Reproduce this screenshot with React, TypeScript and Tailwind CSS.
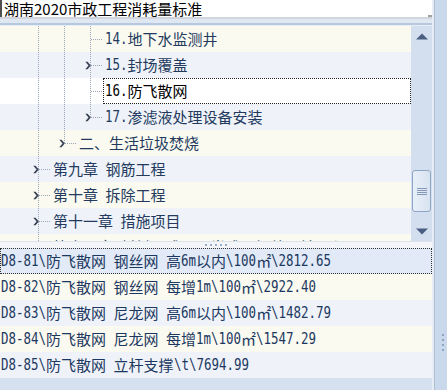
import React from 'react';

const ASCII = /^[\x20-\x7e]+$/;

function Mixed({ text }: { text: string }) {
  const parts = text.match(/[\x20-\x7e]+|[^\x20-\x7e]+/g) ?? [];
  return (
    <>
      {parts.map((p, i) =>
        ASCII.test(p) ? (
          <span
            key={i}
            className="inline-block origin-left scale-x-[0.83] whitespace-pre font-['DejaVu_Sans_Mono',monospace] text-[15px]"
            style={{ marginRight: p.length * 7.5 - p.length * 9.03 }}
          >
            {p}
          </span>
        ) : (
          <span key={i}>{p}</span>
        ),
      )}
    </>
  );
}

type Guide = 'full' | 'top';
type TreeRow = { cols: Guide[]; exp: boolean; text: string; sel?: boolean };

function Cell({ g, conn, exp }: { g: Guide; conn: boolean; exp: boolean }) {
  return (
    <svg width="26" height="26" className="block shrink-0">
      <line
        x1="13.5"
        y1="0"
        x2="13.5"
        y2={g === 'full' ? 26 : 13}
        stroke="#9aa5b7"
        strokeDasharray="1 1"
      />
      {conn && <line x1="14" y1="13.5" x2="26" y2="13.5" stroke="#9aa5b7" strokeDasharray="1 1" />}
      {exp && <path d="M8.3 9.8 L10.6 9.8 L13.8 13.5 L10.6 17.2 L8.3 17.2 L11.5 13.5 Z" fill="#3a4356" />}
    </svg>
  );
}

const treeRows: TreeRow[] = [
  { cols: ['full', 'full', 'full'], exp: false, text: '14.地下水监测井' },
  { cols: ['full', 'full', 'full'], exp: true, text: '15.封场覆盖' },
  { cols: ['full', 'full', 'full'], exp: false, text: '16.防飞散网', sel: true },
  { cols: ['full', 'full', 'top'], exp: true, text: '17.渗滤液处理设备安装' },
  { cols: ['full', 'top'], exp: true, text: '二、生活垃圾焚烧' },
  { cols: ['full'], exp: true, text: '第九章 钢筋工程' },
  { cols: ['full'], exp: true, text: '第十章 拆除工程' },
  { cols: ['full'], exp: true, text: '第十一章 措施项目' },
  { cols: ['full'], exp: true, text: '第十二章 材料及成品、半成品场外运输工程' },
];

const listRows = [
  'D8-81\\防飞散网 钢丝网 高6m以内\\100㎡\\2812.65',
  'D8-82\\防飞散网 钢丝网 每增1m\\100㎡\\2922.40',
  'D8-83\\防飞散网 尼龙网 高6m以内\\100㎡\\1482.79',
  'D8-84\\防飞散网 尼龙网 每增1m\\100㎡\\1547.29',
  'D8-85\\防飞散网 立杆支撑\\t\\7694.99',
];

function Arrow({ up }: { up: boolean }) {
  return (
    <svg width="12" height="7" className="block">
      <path d={up ? 'M0 6.5 L6 0.5 L12 6.5 Z' : 'M0 0.5 L6 6.5 L12 0.5 Z'} fill="#4a5d82" />
    </svg>
  );
}

export default function App() {
  return (
    <div className="flex h-[390px] w-[447px] overflow-hidden bg-[#d5e1ef] font-['Noto_Sans_CJK_SC',sans-serif] text-[15px]">
      <div className="flex w-[432px] shrink-0 flex-col">
        {/* top input */}
        <div className="relative h-[17px] shrink-0 border-l-2 border-[#4f4f4f] bg-white pl-[2px] leading-[17px] text-black">
          湖南2020市政工程消耗量标准
          <span className="absolute bottom-0 right-0 h-[2px] w-[4px] bg-[#a0a0a0]" />
        </div>
        <div className="h-[2px] shrink-0 bg-[#d2d6dc]" />
        <div className="h-[4px] shrink-0 bg-[#dfe7f2]" />
        <div className="h-[2px] shrink-0 bg-[#b7c8de]" />
        <div className="h-[1px] shrink-0 bg-[#e8eef6]" />

        {/* tree */}
        <div className="flex h-[215px] shrink-0">
          <div className="w-[411px] shrink-0 overflow-hidden text-[#233a5e]">
            {treeRows.map((r, idx) => (
              <div
                key={idx}
                className={`flex h-[26px] ${r.sel ? 'bg-white' : idx % 2 === 0 ? 'bg-[#fbfaf0]' : 'bg-[#eff3f9]'}`}
              >
                <div className="w-[25px] shrink-0" />
                {r.cols.map((g, i) => (
                  <Cell key={i} g={g} conn={i === r.cols.length - 1} exp={r.exp && i === r.cols.length - 1} />
                ))}
                <div
                  className={`flex flex-1 items-center whitespace-nowrap border pl-[1px] leading-[20px] ${
                    r.sel ? 'border-dotted border-[#222] text-black' : 'border-transparent'
                  }`}
                >
                  <Mixed text={r.text} />
                </div>
              </div>
            ))}
          </div>
          {/* scrollbar */}
          <div className="flex w-[21px] shrink-0 flex-col bg-[#d3dfee]">
            <div className="flex h-[20px] shrink-0 items-center justify-center">
              <Arrow up />
            </div>
            <div className="h-[124px] shrink-0" />
            <div className="mx-[1px] flex h-[42px] shrink-0 flex-col items-center justify-center gap-[1px] rounded-[3px] border border-[#8ea6c6] bg-gradient-to-r from-[#e8eff8] to-[#d8e3f1]">
              <div className="h-px w-[10px] bg-[#8398b8]" />
              <div className="h-px w-[10px] bg-[#8398b8]" />
              <div className="h-px w-[10px] bg-[#8398b8]" />
              <div className="h-px w-[10px] bg-[#8398b8]" />
            </div>
            <div className="flex-1" />
            <div className="flex h-[20px] shrink-0 items-center justify-center">
              <Arrow up={false} />
            </div>
          </div>
        </div>

        {/* splitter */}
        <div className="flex h-[7px] shrink-0 items-center justify-center gap-[3px] border-t border-[#dde3ea] bg-[#f3f5f8]">
          <div className="h-[2px] w-[2px] bg-[#9aaecb]" />
          <div className="h-[2px] w-[2px] bg-[#9aaecb]" />
          <div className="h-[2px] w-[2px] bg-[#9aaecb]" />
          <div className="h-[2px] w-[2px] bg-[#9aaecb]" />
          <div className="h-[2px] w-[2px] bg-[#9aaecb]" />
        </div>

        {/* list */}
        <div className="flex flex-col text-[#1c3861]">
          {listRows.map((t, idx) => (
            <div
              key={idx}
              className={`flex h-[26px] items-center whitespace-nowrap border leading-[20px] ${
                idx === 0
                  ? 'border-dotted border-[#333] bg-[#e1eaf6]'
                  : idx % 2 === 1
                    ? 'border-transparent bg-[#fbfaf0]'
                    : 'border-transparent bg-[#eff3f9]'
              }`}
            >
              <Mixed text={t} />
            </div>
          ))}
        </div>
      </div>

      {/* right strip */}
      <div className="flex flex-1 border-l-2 border-[#e6ecf4]">
        <div className="flex flex-1 flex-col items-end border-l border-[#aebfd6] bg-[#c9d8eb] pr-[3px] pt-[334px]">
          <div className="flex flex-col gap-[3px]">
            <div className="h-[2px] w-[2px] bg-[#8fa4c2]" />
            <div className="h-[2px] w-[2px] bg-[#8fa4c2]" />
            <div className="h-[2px] w-[2px] bg-[#8fa4c2]" />
            <div className="h-[2px] w-[2px] bg-[#8fa4c2]" />
          </div>
        </div>
      </div>
    </div>
  );
}
